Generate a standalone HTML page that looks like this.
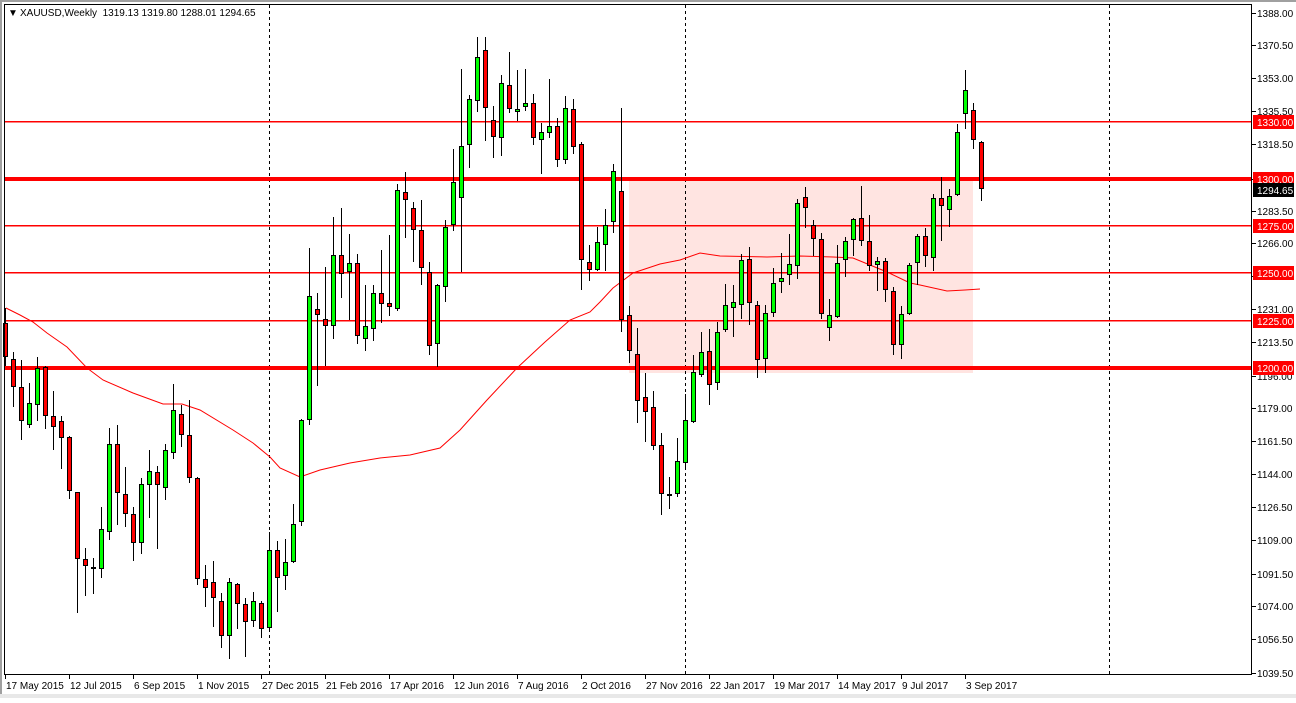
<!DOCTYPE html>
<html><head><meta charset="utf-8">
<style>
html,body{margin:0;padding:0;background:#fff;}
body{width:1296px;height:698px;overflow:hidden;position:relative;font-family:"Liberation Sans",sans-serif;}
svg text{font-family:"Liberation Sans",sans-serif;font-size:10px;}
</style></head><body>
<svg id="c" width="1296" height="698" xmlns="http://www.w3.org/2000/svg" shape-rendering="crispEdges">
<rect x="0" y="0" width="1296" height="698" fill="#fff"/>
<rect x="0" y="0" width="2" height="698" fill="#a0a0a0"/>
<rect x="0" y="0" width="1296" height="2" fill="#a0a0a0"/>
<rect x="0" y="694" width="1296" height="4" fill="#e8e8e8"/>
<rect x="629" y="179" width="344" height="194" fill="#ffe4e1"/>
<g stroke="#000" stroke-width="1" stroke-dasharray="3,3">
<line x1="269.5" y1="5" x2="269.5" y2="674"/>
<line x1="685.5" y1="5" x2="685.5" y2="674"/>
<line x1="1109.5" y1="5" x2="1109.5" y2="674"/>
</g>
<g fill="#ff0000">
<rect x="5" y="121" width="1247" height="1.5"/>
<rect x="5" y="177" width="1247" height="4"/>
<rect x="5" y="225" width="1247" height="1.5"/>
<rect x="5" y="272" width="1247" height="1.5"/>
<rect x="5" y="320" width="1247" height="1.5"/>
<rect x="5" y="366" width="1247" height="4"/>
</g>
<polyline fill="none" stroke="#ff0000" stroke-width="1" shape-rendering="auto" points="6,308 20,315 33,322 47,333 67,347 87,368 103,380 133,393 163,404 182,404 200,410 233,430 253,443 270,457 280,468 300,477 320,470 350,463 380,458 410,455 440,448 460,430 487,400 517,368 545,342 570,320 590,312 600,302 613,288 633,273 660,264 680,260 700,253 720,256 767,257 800,256 833,257 853,258 887,272 910,283 920,285 947,291 965,290 980,289"/>
<g id="candles"></g>
<rect x="4.5" y="4.5" width="1247" height="670" fill="none" stroke="#000" stroke-width="1"/>
<g stroke="#000" id="bt"></g>
<g stroke="#000" id="rt"></g>
<text x="8" y="16" font-size="8">▼</text>
<text x="20" y="16">XAUUSD,Weekly&#160;&#160;1319.13&#160;1319.80&#160;1288.01&#160;1294.65</text>
<g fill="#000">
<text x="1257" y="17">1388.00</text>
<text x="1257" y="49">1370.50</text>
<text x="1257" y="82">1353.00</text>
<text x="1257" y="115">1335.50</text>
<text x="1257" y="148">1318.50</text>
<text x="1257" y="215">1283.50</text>
<text x="1257" y="247">1266.00</text>
<text x="1257" y="280">1248.50</text>
<text x="1257" y="313">1231.00</text>
<text x="1257" y="346">1213.50</text>
<text x="1257" y="380">1196.00</text>
<text x="1257" y="412">1179.00</text>
<text x="1257" y="445">1161.50</text>
<text x="1257" y="478">1144.00</text>
<text x="1257" y="511">1126.50</text>
<text x="1257" y="544">1109.00</text>
<text x="1257" y="578">1091.50</text>
<text x="1257" y="610">1074.00</text>
<text x="1257" y="643">1056.50</text>
<text x="1257" y="677">1039.50</text>
</g>
<g>
<rect x="1253" y="115" width="41" height="14" fill="#ff0000"/><text x="1257" y="126" fill="#fff">1330.00</text>
<rect x="1253" y="172" width="41" height="14" fill="#ff0000"/><text x="1257" y="183" fill="#fff">1300.00</text>
<rect x="1253" y="183" width="41" height="14" fill="#000"/><text x="1257" y="194" fill="#fff">1294.65</text>
<rect x="1253" y="219" width="41" height="14" fill="#ff0000"/><text x="1257" y="230" fill="#fff">1275.00</text>
<rect x="1253" y="266" width="41" height="14" fill="#ff0000"/><text x="1257" y="277" fill="#fff">1250.00</text>
<rect x="1253" y="314" width="41" height="14" fill="#ff0000"/><text x="1257" y="325" fill="#fff">1225.00</text>
<rect x="1253" y="361" width="41" height="14" fill="#ff0000"/><text x="1257" y="372" fill="#fff">1200.00</text>
</g>
<g fill="#000">
<text x="6" y="689">17 May 2015</text>
<text x="70" y="689">12 Jul 2015</text>
<text x="134" y="689">6 Sep 2015</text>
<text x="198" y="689">1 Nov 2015</text>
<text x="262" y="689">27 Dec 2015</text>
<text x="326" y="689">21 Feb 2016</text>
<text x="390" y="689">17 Apr 2016</text>
<text x="454" y="689">12 Jun 2016</text>
<text x="518" y="689">7 Aug 2016</text>
<text x="582" y="689">2 Oct 2016</text>
<text x="646" y="689">27 Nov 2016</text>
<text x="710" y="689">22 Jan 2017</text>
<text x="774" y="689">19 Mar 2017</text>
<text x="838" y="689">14 May 2017</text>
<text x="902" y="689">9 Jul 2017</text>
<text x="966" y="689">3 Sep 2017</text>
</g>
</svg>
<script>
var D=[
"r 323 357 308 366","r 359 387 352 407","r 387 421 360 440","g 403 425 383 428","g 368 405 357 421","r 367 416 366 429","r 416 427 391 450","r 421 438 416 469","r 437 491 436 499","r 492 559 492 613",
"r 559 566 548 596","r 567 569 558 594","g 529 569 507 578","g 444 532 428 540","r 444 493 425 525","r 494 514 467 527","r 514 543 507 561","g 484 543 478 554","g 471 485 450 518","r 472 485 466 549",
"g 450 488 444 500","g 410 453 384 459","r 414 435 405 447","r 435 478 400 483","r 478 579 477 585","r 579 588 565 607","r 582 598 561 627","r 601 636 593 648","g 582 636 578 659","r 584 604 583 629",
"r 604 622 598 657","g 601 621 592 627","r 603 629 601 638","g 550 628 532 629","r 550 578 541 612","g 562 576 539 590","g 524 562 504 563","g 420 522 419 526","g 296 420 248 425","r 309 315 293 386",
"r 319 326 267 366","g 255 326 217 339","r 255 274 208 298","g 263 272 234 320","r 263 336 254 344","g 326 339 285 351","g 293 329 285 341","r 293 304 250 323","r 303 307 235 316","g 190 309 184 311",
"r 192 200 172 238","r 208 230 202 262","r 230 268 200 285","r 272 346 262 355","g 285 344 284 367","g 227 287 220 302","g 182 225 149 231","g 146 198 69 272","g 99 145 95 168","g 57 101 37 112",
"r 50 108 37 141","r 120 137 106 158","g 83 138 75 156","r 85 109 52 113","g 109 112 70 121","g 103 107 69 111","r 103 138 94 145","g 132 140 123 174","g 126 133 79 138","r 126 160 118 167",
"g 108 160 96 164","r 109 147 99 154","r 144 260 142 290","r 262 270 245 281","g 242 270 227 271","g 225 245 209 271","g 171 222 164 233","r 191 320 108 332","r 315 351 306 363","r 354 401 328 423",
"r 397 412 373 442","r 407 446 391 450","r 445 494 433 515","k 494 495 477 509","g 461 494 438 497","g 420 463 394 470","g 372 422 355 423","g 352 375 332 377","r 351 385 329 405","g 332 383 322 390",
"g 305 330 284 332","g 302 308 285 337","g 260 305 254 319","r 259 303 247 325","r 305 360 301 378","g 313 359 305 373","g 283 313 268 317","g 278 282 253 293","g 264 275 234 285","g 203 266 199 279",
"r 197 208 187 228","r 225 239 220 256","r 239 314 233 319","g 315 328 299 341","g 263 317 245 318","g 241 260 237 277","g 219 240 218 256","r 218 241 186 246","r 241 266 215 271","g 261 265 257 291",
"r 261 290 258 302","r 291 345 287 355","g 314 345 306 359","g 265 314 263 315","g 236 263 234 285","r 236 256 228 267","g 198 258 194 271","r 198 206 177 241","g 196 210 189 227","g 132 195 124 196",
"g 90 114 70 129","r 110 140 103 149","r 142 189 141 201"];
var g=document.getElementById("candles"),s="";
D.forEach(function(d,i){var p=d.split(" "),cx=Math.round(5.3+8*i),t=+p[1],b=+p[2],h=+p[3],l=+p[4];
var col=p[0]=="g"?"#00ff00":p[0]=="r"?"#ff0000":"#000";
s+='<line x1="'+(cx+.5)+'" y1="'+h+'" x2="'+(cx+.5)+'" y2="'+l+'" stroke="#000"/>';
if(b-t<2){s+='<rect x="'+(cx-2)+'" y="'+t+'" width="5" height="2" fill="#000"/>';}
else s+='<rect x="'+(cx-1.5)+'" y="'+(t+.5)+'" width="4" height="'+(b-t-1)+'" fill="'+col+'" stroke="#000"/>';});
g.innerHTML=s;
var bt="";for(var k=0;k<16;k++){var x=5+64*k;bt+='<line x1="'+(x+.5)+'" y1="674" x2="'+(x+.5)+'" y2="679"/>';}
document.getElementById("bt").innerHTML=bt;
var ys=[13,45,78,111,144,179,211,243,276,309,342,376,408,441,474,507,540,574,606,639,673],rt="";
ys.forEach(function(y){rt+='<line x1="1252" y1="'+(y+.5)+'" x2="1256" y2="'+(y+.5)+'"/>';});
document.getElementById("rt").innerHTML=rt;
</script>
</body></html>
